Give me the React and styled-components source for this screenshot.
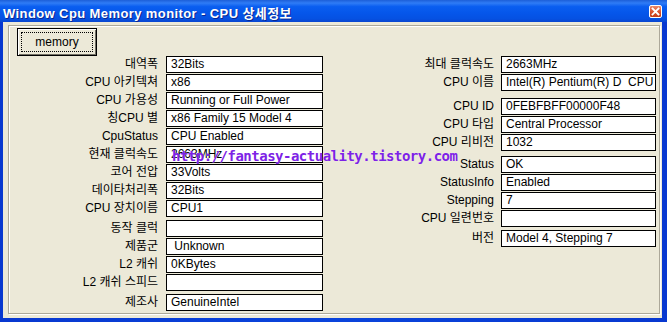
import React from "react";
import styled, { createGlobalStyle } from "styled-components";

const GlobalStyle = createGlobalStyle`
  html, body { margin: 0; padding: 0; background: #0a3fd8; }
  body { width: 667px; height: 322px; overflow: hidden; }
  * { box-sizing: border-box; }
`;

const Window = styled.div`
  width: 667px;
  height: 322px;
  display: flex;
  flex-direction: column;
  background: linear-gradient(90deg, #0838d0 0%, #0a44dc 50%, #0838d0 100%);
  font-family: "Liberation Sans", "Noto Sans CJK KR", sans-serif;
`;

const TitleBar = styled.div`
  height: 22px;
  flex: none;
  display: flex;
  align-items: center;
  justify-content: space-between;
  padding: 2px 5px 0 3px;
  background: linear-gradient(
    180deg,
    #1d5fd8 0%,
    #2f7cf6 14%,
    #0a5ef0 30%,
    #0556ea 60%,
    #0551e2 85%,
    #0a46d0 100%
  );
`;

const Title = styled.span`
  color: #fff;
  font-weight: bold;
  font-size: 13px;
  letter-spacing: 0.4px;
  white-space: nowrap;
  text-shadow: 1px 1px 0 #0a2790;
  font-family: "Liberation Sans", "Noto Sans CJK KR", sans-serif;
`;

const CloseButton = styled.div`
  width: 13px;
  height: 13px;
  margin-top: -2px;
  border: 1px solid #fff;
  border-radius: 2px;
  background: linear-gradient(180deg, #e98a6c 0%, #d9512c 55%, #c23d18 100%);
  display: flex;
  align-items: center;
  justify-content: center;
`;

const Body = styled.div`
  flex: 1;
  margin: 0 5px 4px 3px;
  padding: 3px 2px 4px 5px;
  background: #ece9d8;
  display: flex;
`;

const Panel = styled.div`
  position: relative;
  flex: 1;
  border: 1px solid #aca899;
  box-shadow: inset 1px 1px 0 #fff, 1px 1px 0 #fff;
  padding-top: 2px;
  display: flex;
  flex-direction: column;
`;

const Button = styled.div`
  width: 80px;
  height: 28px;
  margin-left: 8px;
  border: 1px solid #000;
  background: #ece9d8;
  box-shadow: inset 1px 1px 0 #fff, inset -1px -1px 0 #716f64;
  padding: 3px;
  display: flex;
`;

const FocusRect = styled.div`
  flex: 1;
  border: 1px dotted #000;
  display: flex;
  align-items: center;
  justify-content: center;
  font-size: 12px;
  color: #000;
  padding-bottom: 1px;
`;

const Columns = styled.div`
  display: flex;
  align-items: flex-start;
`;

const Column = styled.div`
  width: ${(p) => p.$width}px;
  display: flex;
  flex-direction: column;
  gap: 1px;
`;

const Row = styled.div`
  height: 17px;
  margin-top: ${(p) => p.$extra || 0}px;
  display: flex;
  align-items: center;
  justify-content: flex-end;
  gap: ${(p) => p.$gap}px;
`;

const Label = styled.span`
  font-size: 12px;
  color: #000;
  white-space: nowrap;
  line-height: 17px;
`;

const Field = styled.div`
  width: ${(p) => p.$w}px;
  height: 17px;
  flex: none;
  border: 1px solid #000;
  background: #fff;
  padding-left: 4px;
  font-size: 12px;
  line-height: 15px;
  color: #000;
  white-space: pre;
  overflow: hidden;
`;

const Watermark = styled.div`
  position: absolute;
  left: 163px;
  top: 123px;
  font-family: "DejaVu Sans Mono", monospace;
  font-weight: bold;
  font-size: 14px;
  line-height: 14px;
  letter-spacing: -0.5px;
  color: #7d22e6;
  white-space: nowrap;
  text-shadow: 0 0 1px rgba(255, 255, 255, 0.6);
  pointer-events: none;
`;

const leftRows = [
  ["대역폭", "32Bits"],
  ["CPU 아키텍쳐", "x86"],
  ["CPU 가용성", "Running or Full Power"],
  ["칭CPU 별", "x86 Family 15 Model 4"],
  ["CpuStatus", "CPU Enabled"],
  ["현재 클럭속도", "2663MHz"],
  ["코어 전압", "33Volts"],
  ["데이타처리폭", "32Bits"],
  ["CPU 장치이름", "CPU1"],
  ["동작 클럭", "", 2],
  ["제품군", " Unknown"],
  ["L2 캐쉬", "0KBytes"],
  ["L2 캐쉬 스피드", ""],
  ["제조사", "GenuineIntel", 2],
];

const rightRows = [
  ["최대 클럭속도", "2663MHz"],
  ["CPU 이름", "Intel(R) Pentium(R) D  CPU 2.66GHz"],
  ["CPU ID", "0FEBFBFF00000F48", 6],
  ["CPU 타입", "Central Processor"],
  ["CPU 리비전", "1032"],
  ["Status", "OK", 4],
  ["StatusInfo", "Enabled"],
  ["Stepping", "7"],
  ["CPU 일련번호", ""],
  ["버전", "Model 4, Stepping 7", 2],
];

export default function App() {
  return (
    <>
      <GlobalStyle />
      <Window>
        <TitleBar>
          <Title>Window Cpu Memory monitor - CPU 상세정보</Title>
          <CloseButton>
            <svg width="9" height="9" viewBox="0 0 9 9">
              <path d="M1.5 1.5 L7.5 7.5 M7.5 1.5 L1.5 7.5" stroke="#fff" strokeWidth="1.8" strokeLinecap="square" />
            </svg>
          </CloseButton>
        </TitleBar>
        <Body>
          <Panel>
            <Button>
              <FocusRect>memory</FocusRect>
            </Button>
            <Columns>
              <Column $width={314}>
                {leftRows.map(([label, value, extra]) => (
                  <Row key={label} $gap={8} $extra={extra}>
                    <Label>{label}</Label>
                    <Field $w={157}>{value}</Field>
                  </Row>
                ))}
              </Column>
              <Column $width={333}>
                {rightRows.map(([label, value, extra]) => (
                  <Row key={label} $gap={7} $extra={extra}>
                    <Label>{label}</Label>
                    <Field $w={155}>{value}</Field>
                  </Row>
                ))}
              </Column>
            </Columns>
            <Watermark>http://fantasy-actuality.tistory.com</Watermark>
          </Panel>
        </Body>
      </Window>
    </>
  );
}
